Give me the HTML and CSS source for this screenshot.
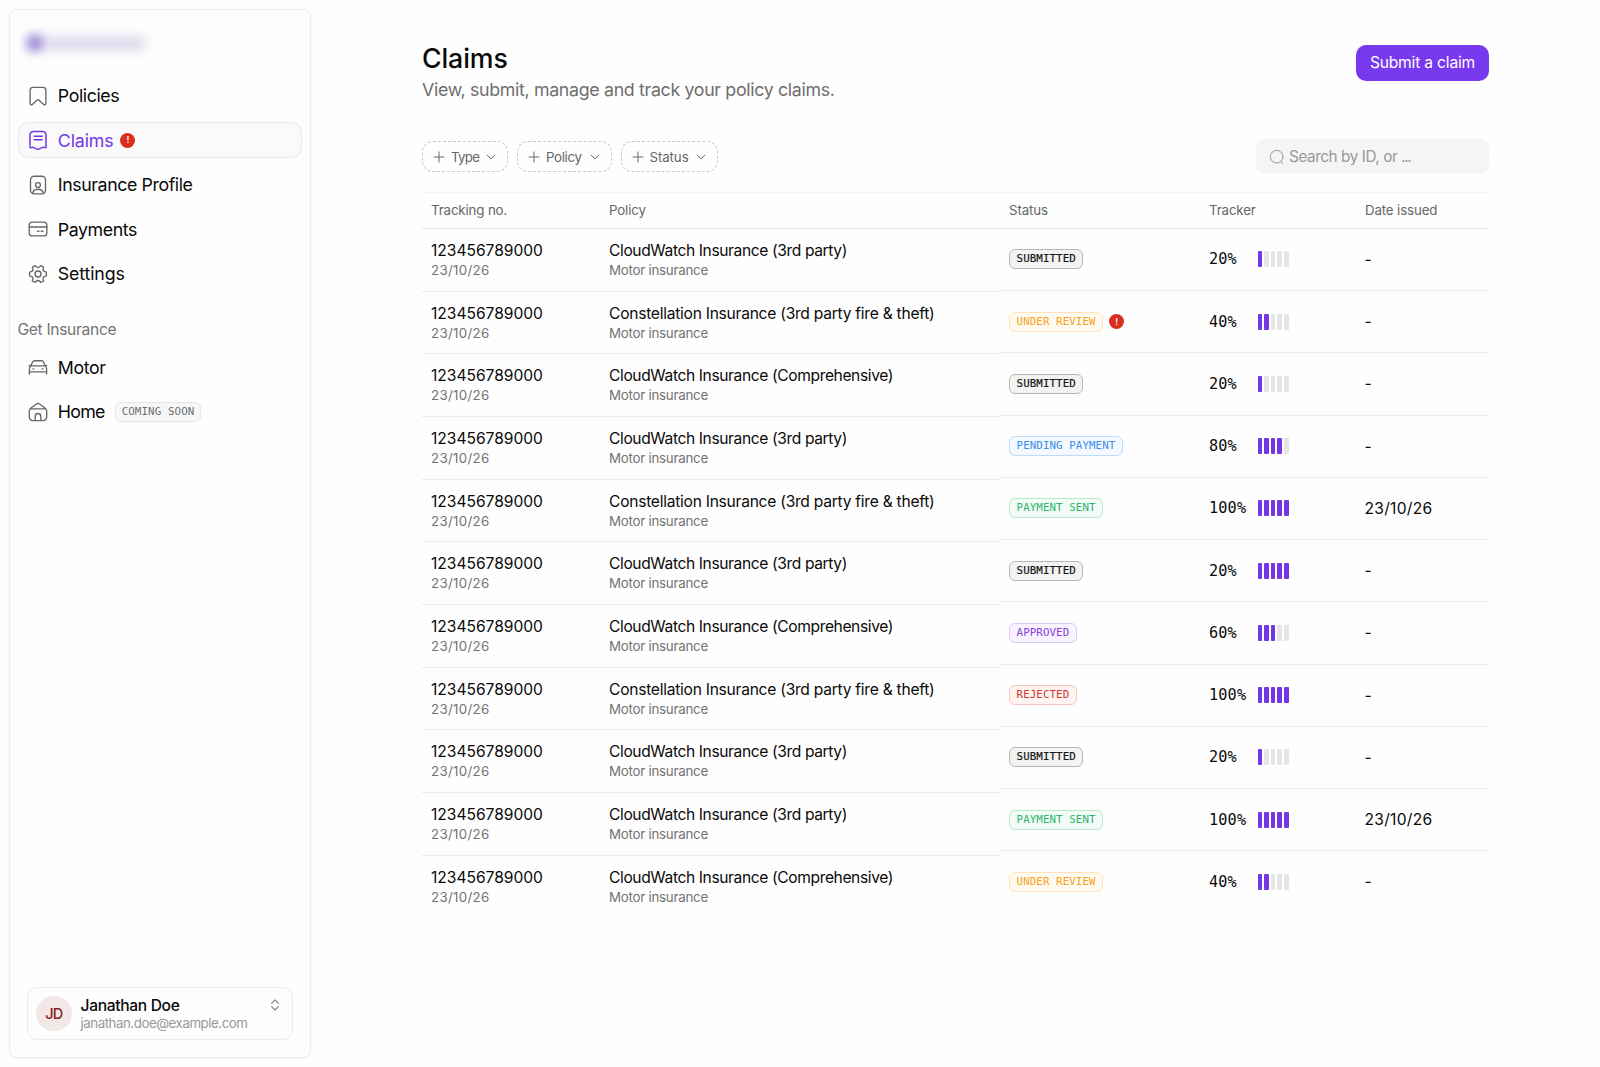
FILE: index.html
```html
<!DOCTYPE html>
<html lang="en">
<head>
<meta charset="utf-8">
<title>Claims</title>
<link rel="stylesheet" href="styles.css">
</head>
<body>
<svg class="sprite" aria-hidden="true">
  <symbol id="i-bookmark" viewBox="0 0 20 20"><path d="M5.2 1.3h9.6A3.1 3.1 0 0 1 17.9 4.4v12.9c0 1.3-1.3 1.900-2.200 1.100l-4.600-4.100a1.600 1.600 0 0 0-2.200 0l-4.600 4.100c-.9.8-2.200.2-2.200-1.100V4.400A3.100 3.100 0 0 1 5.200 1.300z"/></symbol>
  <symbol id="i-claim" viewBox="0 0 20 20"><path d="M2 16.900V4.800a3.200 3.200 0 0 1 3.200-3.200h9.600A3.200 3.200 0 0 1 18 4.800v12.100c0 .8-.7 1.100-1.300.8-1.200-.6-2.100-.6-3.200.1l-1.900 1a3.200 3.200 0 0 1-3.200 0l-1.900-1c-1.100-.7-2-.7-3.200-.1-.6.3-1.300 0-1.300-.8zM6.200 6.300h8M6.200 9.700h8"/></symbol>
  <symbol id="i-profile" viewBox="0 0 20 20"><rect x="2.500" y="1.200" width="15" height="17.600" rx="3.600"/><circle cx="10" cy="10" r="2.400"/><path d="M4.800 18.200c.3-2.800 2.300-4 5.200-4s4.900 1.200 5.200 4"/></symbol>
  <symbol id="i-card" viewBox="0 0 20 20"><rect x="1.200" y="3.100" width="17.600" height="13.800" rx="3"/><path d="M1.200 8h17.600M9.600 12.200h1.400M13.300 12.200h1.700"/></symbol>
  <symbol id="i-gear" viewBox="0 0 20 20"><circle cx="10" cy="10" r="3"/><path d="M18.200 12.100L16.900 12.300Q15.700 12.600 15.200 13.600Q14.700 14.500 15.200 15.500L15.700 16.700Q14.500 17.800 12.600 18.400L11.900 17.400Q11.200 16.500 10 16.500T8.100 17.400L7.400 18.400Q5.500 17.800 4.300 16.700L4.800 15.500Q5.300 14.500 4.800 13.600Q4.300 12.600 3.100 12.300L1.800 12.100Q1.200 10 1.800 7.900L3.100 7.700Q4.300 7.400 4.800 6.400Q5.300 5.500 4.800 4.500L4.300 3.300Q5.500 2.200 7.400 1.600L8.100 2.600Q8.800 3.500 10 3.500T11.900 2.600L12.600 1.600Q14.500 2.200 15.700 3.300L15.200 4.500Q14.700 5.500 15.200 6.400Q15.700 7.400 16.900 7.700L18.200 7.900Q18.800 10 18.200 12.100z"/></symbol>
  <symbol id="i-car" viewBox="0 0 20 20"><path d="M2.900 8.800l1.500-3.500a2.600 2.600 0 0 1 2.400-1.600h6.400a2.600 2.600 0 0 1 2.400 1.600l1.500 3.500M1.200 8.400l1.700.4h14.200l1.700-.4M2.900 8.800c-1 .8-1.500 1.700-1.500 2.900v5.400M17.100 8.800c1 .8 1.500 1.700 1.500 2.900v5.400M1.400 14.900h17.200M5.100 11.900h.8M14.100 11.900h.8"/></symbol>
  <symbol id="i-home" viewBox="0 0 20 20"><path d="M1.300 9.200c0-1.500.5-2.300 1.700-3.200l5.400-4a2.700 2.700 0 0 1 3.200 0l5.400 4c1.200.9 1.700 1.700 1.700 3.200v5.900a3.500 3.500 0 0 1-3.500 3.500H4.800a3.500 3.500 0 0 1-3.500-3.500zM2.600 6.800h14.800M7.200 18.500v-4.200a2.800 2.800 0 0 1 5.600 0v4.200"/></symbol>
  <symbol id="i-plus" viewBox="0 0 12 12"><path d="M6 1v10M1 6h10"/></symbol>
  <symbol id="i-down" viewBox="0 0 10 10"><path d="M1.200 3.200L5 6.800l3.800-3.600"/></symbol>
  <symbol id="i-search" viewBox="0 0 16 16"><circle cx="7.700" cy="7.700" r="6.300"/><path d="M11.700 12.300l2 2.500"/></symbol>
  <symbol id="i-updown" viewBox="0 0 10 12"><path d="M1.600 4.400L5 1l3.400 3.400M1.600 7.600L5 11l3.400-3.400"/></symbol>
</svg>

<div class="app">
  <aside class="sidebar">
    <div class="brand"><span class="brand-mark"></span><span class="brand-name"></span></div>
    <nav class="nav">
      <a class="nav-item"><svg class="icon"><use href="#i-bookmark"/></svg>Policies</a>
      <a class="nav-item active"><svg class="icon"><use href="#i-claim"/></svg><span class="tight">Claims</span><span class="alert">!</span></a>
      <a class="nav-item"><svg class="icon"><use href="#i-profile"/></svg>Insurance Profile</a>
      <a class="nav-item"><svg class="icon"><use href="#i-card"/></svg>Payments</a>
      <a class="nav-item"><svg class="icon"><use href="#i-gear"/></svg><span class="tight">Settings</span></a>
    </nav>
    <div class="nav-label">Get Insurance</div>
    <nav class="nav">
      <a class="nav-item"><svg class="icon"><use href="#i-car"/></svg>Motor</a>
      <a class="nav-item"><svg class="icon"><use href="#i-home"/></svg><span class="home">Home</span><span class="soon">COMING SOON</span></a>
    </nav>
    <div class="user">
      <span class="avatar">JD</span>
      <div class="user-text"><div class="user-name">Janathan Doe</div><div class="user-mail">janathan.doe@example.com</div></div>
      <svg class="updown"><use href="#i-updown"/></svg>
    </div>
  </aside>

  <main class="main">
    <header class="head">
      <div><h1>Claims</h1><p>View, submit, manage and track your policy claims.</p></div>
      <button class="submit">Submit a claim</button>
    </header>
    <div class="toolbar">
      <div class="filters">
        <div class="filter type"><svg class="plus"><use href="#i-plus"/></svg><span>Type</span><svg class="down"><use href="#i-down"/></svg></div>
        <div class="filter policy"><svg class="plus"><use href="#i-plus"/></svg><span>Policy</span><svg class="down"><use href="#i-down"/></svg></div>
        <div class="filter status"><svg class="plus"><use href="#i-plus"/></svg><span>Status</span><svg class="down"><use href="#i-down"/></svg></div>
      </div>
      <div class="search"><svg class="glass"><use href="#i-search"/></svg><span>Search by ID, or <span class="dots">...</span></span></div>
    </div>

    <section class="table">
      <div class="col tall">
        <div class="th">Tracking no.</div>
        <div class="td"><b class="num">123456789000</b><small class="date">23/10/26</small></div>
        <div class="td"><b class="num">123456789000</b><small class="date">23/10/26</small></div>
        <div class="td"><b class="num">123456789000</b><small class="date">23/10/26</small></div>
        <div class="td"><b class="num">123456789000</b><small class="date">23/10/26</small></div>
        <div class="td"><b class="num">123456789000</b><small class="date">23/10/26</small></div>
        <div class="td"><b class="num">123456789000</b><small class="date">23/10/26</small></div>
        <div class="td"><b class="num">123456789000</b><small class="date">23/10/26</small></div>
        <div class="td"><b class="num">123456789000</b><small class="date">23/10/26</small></div>
        <div class="td"><b class="num">123456789000</b><small class="date">23/10/26</small></div>
        <div class="td"><b class="num">123456789000</b><small class="date">23/10/26</small></div>
        <div class="td"><b class="num">123456789000</b><small class="date">23/10/26</small></div>
      </div>
      <div class="col tall">
        <div class="th">Policy</div>
        <div class="td"><b>CloudWatch Insurance (3rd party)</b><small>Motor insurance</small></div>
        <div class="td"><b class="loose">Constellation Insurance (3rd party fire &amp; theft)</b><small>Motor insurance</small></div>
        <div class="td"><b>CloudWatch Insurance (Comprehensive)</b><small>Motor insurance</small></div>
        <div class="td"><b>CloudWatch Insurance (3rd party)</b><small>Motor insurance</small></div>
        <div class="td"><b class="loose">Constellation Insurance (3rd party fire &amp; theft)</b><small>Motor insurance</small></div>
        <div class="td"><b>CloudWatch Insurance (3rd party)</b><small>Motor insurance</small></div>
        <div class="td"><b>CloudWatch Insurance (Comprehensive)</b><small>Motor insurance</small></div>
        <div class="td"><b class="loose">Constellation Insurance (3rd party fire &amp; theft)</b><small>Motor insurance</small></div>
        <div class="td"><b>CloudWatch Insurance (3rd party)</b><small>Motor insurance</small></div>
        <div class="td"><b>CloudWatch Insurance (3rd party)</b><small>Motor insurance</small></div>
        <div class="td"><b>CloudWatch Insurance (Comprehensive)</b><small>Motor insurance</small></div>
      </div>
      <div class="col">
        <div class="th">Status</div>
        <div class="td"><span class="pill submitted">SUBMITTED</span></div>
        <div class="td"><span class="pill review">UNDER REVIEW</span><span class="alert">!</span></div>
        <div class="td"><span class="pill submitted">SUBMITTED</span></div>
        <div class="td"><span class="pill pending">PENDING PAYMENT</span></div>
        <div class="td"><span class="pill sent">PAYMENT SENT</span></div>
        <div class="td"><span class="pill submitted">SUBMITTED</span></div>
        <div class="td"><span class="pill approved">APPROVED</span></div>
        <div class="td"><span class="pill rejected">REJECTED</span></div>
        <div class="td"><span class="pill submitted">SUBMITTED</span></div>
        <div class="td"><span class="pill sent">PAYMENT SENT</span></div>
        <div class="td"><span class="pill review">UNDER REVIEW</span></div>
      </div>
      <div class="col">
        <div class="th">Tracker</div>
        <div class="td"><span class="pct">20%</span><span class="bars n1"><i></i><i></i><i></i><i></i><i></i></span></div>
        <div class="td"><span class="pct">40%</span><span class="bars n2"><i></i><i></i><i></i><i></i><i></i></span></div>
        <div class="td"><span class="pct">20%</span><span class="bars n1"><i></i><i></i><i></i><i></i><i></i></span></div>
        <div class="td"><span class="pct">80%</span><span class="bars n4"><i></i><i></i><i></i><i></i><i></i></span></div>
        <div class="td"><span class="pct">100%</span><span class="bars n5"><i></i><i></i><i></i><i></i><i></i></span></div>
        <div class="td"><span class="pct">20%</span><span class="bars n5"><i></i><i></i><i></i><i></i><i></i></span></div>
        <div class="td"><span class="pct">60%</span><span class="bars n3"><i></i><i></i><i></i><i></i><i></i></span></div>
        <div class="td"><span class="pct">100%</span><span class="bars n5"><i></i><i></i><i></i><i></i><i></i></span></div>
        <div class="td"><span class="pct">20%</span><span class="bars n1"><i></i><i></i><i></i><i></i><i></i></span></div>
        <div class="td"><span class="pct">100%</span><span class="bars n5"><i></i><i></i><i></i><i></i><i></i></span></div>
        <div class="td"><span class="pct">40%</span><span class="bars n2"><i></i><i></i><i></i><i></i><i></i></span></div>
      </div>
      <div class="col issued">
        <div class="th">Date issued</div>
        <div class="td">-</div>
        <div class="td">-</div>
        <div class="td">-</div>
        <div class="td">-</div>
        <div class="td">23/10/26</div>
        <div class="td">-</div>
        <div class="td">-</div>
        <div class="td">-</div>
        <div class="td">-</div>
        <div class="td">23/10/26</div>
        <div class="td">-</div>
      </div>
    </section>
  </main>
</div>
</body>
</html>
```
FILE: styles.css
```css
* { box-sizing: border-box; }
body { margin: 0; background: #fefefe; color: #0a0a0a; font-family: Inter, "Liberation Sans", sans-serif; font-size: 15.6px; }
.sprite { display: none; }
svg { flex: none; fill: none; stroke: currentColor; stroke-width: 1.35; stroke-linecap: round; stroke-linejoin: round; }
.app { display: flex; height: 1067px; overflow: hidden; white-space: nowrap; }

.sidebar { display: flex; flex-direction: column; flex: none; width: 302px; height: 1049px; margin: 9px 0 0 9px; padding: 23px 8px 17px; border: 1px solid #ebebeb; border-radius: 8px; box-shadow: 0 1px 2px rgba(0, 0, 0, .04); }
.brand { display: flex; align-items: center; gap: 0; height: 20px; margin: 0 0 24.8px 8px; }
.brand-mark { width: 18px; height: 18px; border-radius: 6px; background: #8a74cf; opacity: .75; filter: blur(5px); }
.brand-name { width: 101px; height: 13px; background: #b8abd8; opacity: .5; filter: blur(6px); }
.nav { display: flex; flex-direction: column; gap: 9px; }
.nav-item { display: flex; align-items: center; height: 35.5px; padding-left: 9px; border: 1px solid transparent; border-radius: 10px; font-size: 17.8px; letter-spacing: -.42px; }
.icon { width: 20px; height: 20px; margin-right: 9.8px; color: #666; }
.nav-item.active { background: #fafafa; border-color: #e8e8e8; color: #7336e6; }
.nav-item.active .icon { color: #7336e6; stroke-width: 1.5; }
.tight { letter-spacing: -.15px; }
.home { letter-spacing: -.75px; }
.alert { display: flex; align-items: center; justify-content: center; width: 15px; height: 15px; margin-left: 7px; border-radius: 50%; background: #d92d20; color: #fff; font: 700 9px "DejaVu Sans Mono", monospace; letter-spacing: 0; }
.soon { height: 20px; margin-left: 10.5px; padding: 0 5.5px; border: 1px solid #e4e6e8; border-radius: 6px; background: #f7f7f8; color: #6b7075; font: 10.8px/18px "DejaVu Sans Mono", monospace; letter-spacing: .12px; }
.nav-label { margin: 28.4px 0 9.9px -.5px; color: #737373; font-size: 15.6px; line-height: 20px; letter-spacing: -.32px; }

.user { display: flex; align-items: center; height: 53px; margin: auto 9px 0; padding: 0 12px 0 8px; border: 1px solid #ebebeb; border-radius: 10px; }
.avatar { display: flex; align-items: center; justify-content: center; width: 35.5px; height: 35.5px; margin-right: 9px; border-radius: 50%; background: #f2e8e8; color: #8c1d1d; font-size: 14.5px; font-weight: 500; letter-spacing: -.9px; }
.user-text { flex: 1; padding-top: 1px; }
.user-name { font-weight: 500; line-height: 18px; letter-spacing: -.33px; }
.user-mail { color: #999; font-size: 13.3px; line-height: 17px; letter-spacing: -.46px; }
.updown { width: 10px; height: 12px; margin-bottom: 17px; color: #888; stroke-width: 1.2; }

.main { flex: none; width: 1067px; margin-left: 111px; padding-top: 42.3px; }
.head { display: flex; justify-content: space-between; align-items: flex-start; }
h1 { margin: 0 0 1.6px; font-size: 26.7px; line-height: 32px; font-weight: 500; letter-spacing: -.1px; }
.head p { margin: 0; color: #6e6e6e; font-size: 17.8px; line-height: 27px; letter-spacing: -.33px; }
.submit { width: 133px; height: 36px; margin-top: 2.3px; padding: 0; border: 0; border-radius: 10px; background: #7839ee; color: #fff; font: 15.6px Inter, sans-serif; letter-spacing: -.18px; }
.toolbar { display: flex; align-items: center; justify-content: space-between; height: 35.5px; margin: 36.1px 0 18px; }
.filters { display: flex; gap: 9px; }
.filter { display: flex; align-items: center; height: 31px; padding: 0 11px 0 10px; border: 1px dashed #c9c9c9; border-radius: 11px; color: #666; font-size: 13.3px; letter-spacing: -.35px; }
.type { width: 86px; letter-spacing: -.7px; }
.policy { width: 94.5px; }
.status { width: 97.5px; letter-spacing: -.1px; }
.plus { width: 12px; height: 12px; margin-right: 6px; stroke-width: 1; }
.down { width: 10px; height: 10px; margin-left: auto; stroke-width: 1; }
.search { display: flex; align-items: center; width: 233px; height: 35.5px; padding-left: 13px; border-radius: 9px; background: #f5f5f5; color: #999; font-size: 15.3px; letter-spacing: -.43px; }
.glass { width: 16px; height: 16px; margin-right: 4px; stroke-width: 1; }
.dots { letter-spacing: -1.4px; }

.table { display: grid; grid-template-columns: 178px 400px 200px 156px 133px; }
.th { height: 36.5px; padding-left: 9px; border-top: 1px solid #f3f3f3; border-bottom: 1px solid #e8e8e8; color: #666; font-size: 13.3px; line-height: 35px; letter-spacing: -.14px; }
.td { display: flex; align-items: center; height: 62.25px; padding: 0 0 .4px 9px; border-bottom: 1px solid #ebebeb; }
.td:last-child { border-bottom-color: transparent; }
.tall .td { flex-direction: column; align-items: flex-start; height: 62.67px; padding-top: 12.1px; }
.td b { font-weight: 400; line-height: 20px; letter-spacing: -.39px; }
.td b.loose { letter-spacing: -.26px; }
.td b.num { letter-spacing: -.02px; }
.td small { color: #737373; font-size: 13.3px; line-height: 18.6px; letter-spacing: -.24px; }
.td small.date { letter-spacing: .3px; }
.issued .td { padding-left: 8.6px; letter-spacing: .25px; }
.pill { height: 20px; padding: 0 6.6px; border: 1px solid; border-radius: 6px; font: 10.8px/18px "DejaVu Sans Mono", monospace; letter-spacing: .08px; }
.submitted { color: #171717; background: #f3f3f3; border-color: #b5b5b5; -webkit-text-stroke: .2px; }
.review { color: #f5a31a; background: #fffaf0; border-color: #fde3ba; }
.pending { color: #3b8de8; background: #f3f9ff; border-color: #bddcfb; }
.sent { color: #2fb36d; background: #f1fcf6; border-color: #bce8d0; }
.approved { color: #8a3fe0; background: #f8f3ff; border-color: #dcc8fa; }
.rejected { color: #cf3a30; background: #fff3f2; border-color: #f8c6c2; }
.td .alert { margin-left: 6px; }
.pct { width: 48.5px; font: 15.2px/18px "DejaVu Sans Mono", monospace; letter-spacing: .15px; }
.bars { display: flex; gap: 2.17px; }
.bars i { width: 4.5px; height: 16px; border-radius: 1px; background: #e5e5e5; }
.n1 i:nth-child(-n+1), .n2 i:nth-child(-n+2), .n3 i:nth-child(-n+3), .n4 i:nth-child(-n+4), .n5 i { background: #7336e6; }
```
